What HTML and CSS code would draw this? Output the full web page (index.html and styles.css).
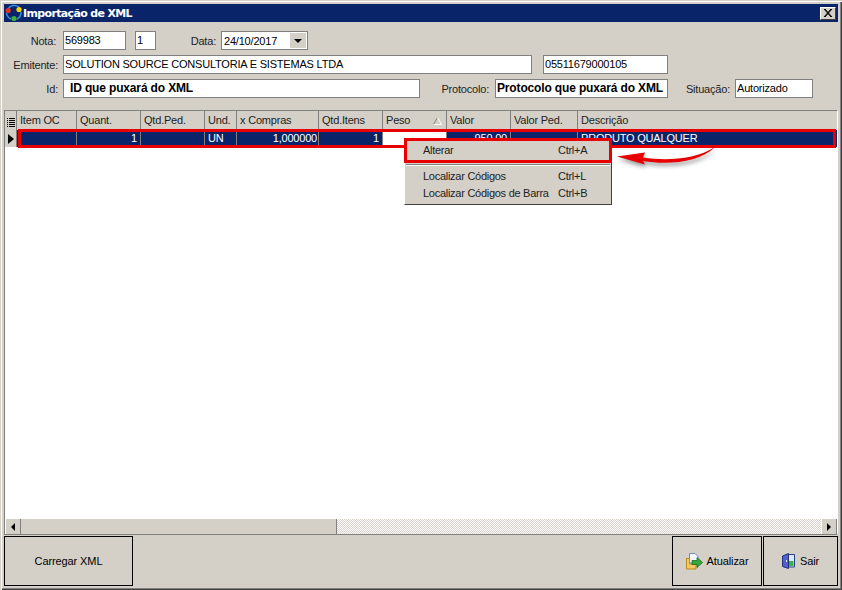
FILE: index.html
```html
<!DOCTYPE html>
<html lang="pt">
  <head>
    <meta charset="UTF-8" />
    <title>Importação de XML</title>
    <link rel="stylesheet" href="styles.css">
  </head>
  <body>
    <div class="window">
      <div class="titlebar">
        <svg class="logo" width="18" height="18" viewBox="0 0 18 18">
          <path d="M3 5 A7.5 7.5 0 0 1 14 3 M16 8 A7.5 7.5 0 0 1 12 15 M6 15 A7.5 7.5 0 0 1 1.5 9" fill="none" stroke="#3a8fe0" stroke-width="1.5"/>
          <circle cx="3.2" cy="6.5" r="2.6" fill="#e8301c"/>
          <circle cx="14" cy="5.5" r="2.6" fill="#f5d60a"/>
          <circle cx="9" cy="14.5" r="2.6" fill="#3fae35"/>
        </svg>
        <span class="title">Importação de XML</span>
        <button class="close">
          <svg width="9" height="8" viewBox="0 0 9 8"><path d="M1 0 L8 8 M0 0 L7 8 M8 0 L1 8 M7 0 L0 8" stroke="#000" stroke-width="1"/></svg>
        </button>
      </div>

      <div class="form">
        <div class="form-row">
          <label class="lbl-nota">Nota:</label>
          <div class="field w-nota">569983</div>
          <div class="field w-serie">1</div>
          <label class="lbl-data">Data:</label>
          <div class="field combo">
            <span>24/10/2017</span>
            <span class="combo-btn"></span>
          </div>
        </div>
        <div class="form-row">
          <label class="lbl-first">Emitente:</label>
          <div class="field w-emitente">SOLUTION SOURCE CONSULTORIA E SISTEMAS LTDA</div>
          <div class="field w-cnpj">05511679000105</div>
        </div>
        <div class="form-row">
          <label class="lbl-first">Id:</label>
          <div class="field bold w-id">ID que puxará do XML</div>
          <label class="lbl-protocolo">Protocolo:</label>
          <div class="field bold w-protocolo">Protocolo que puxará do XML</div>
          <label class="lbl-situacao">Situação:</label>
          <div class="field w-situacao">Autorizado</div>
        </div>
      </div>

      <div class="grid">
        <div class="grid-head">
          <div class="cell c-ind">
            <svg width="8" height="11" viewBox="0 0 8 11"><path d="M0 1.5h1M0 3.5h1M0 5.5h1M0 7.5h1M0 9.5h1M2 1.5h6M2 3.5h6M2 5.5h6M2 7.5h6M2 9.5h6" stroke="#000"/></svg>
          </div>
          <div class="cell c-item">Item OC</div>
          <div class="cell c-quant">Quant.</div>
          <div class="cell c-qtdped">Qtd.Ped.</div>
          <div class="cell c-und">Und.</div>
          <div class="cell c-compras">x Compras</div>
          <div class="cell c-itens">Qtd.Itens</div>
          <div class="cell c-peso">Peso
            <svg class="sort" width="9" height="8" viewBox="0 0 9 8"><path d="M4.5 .5 L8.5 7.5 H.5 Z" fill="#d4d0c8"/><path d="M4.5 .5 L.5 7.5" stroke="#808080" fill="none"/><path d="M4.5 .5 L8.5 7.5 H.5" stroke="#fff" fill="none"/></svg>
          </div>
          <div class="cell c-valor">Valor</div>
          <div class="cell c-valorped">Valor Ped.</div>
          <div class="cell c-desc">Descrição</div>
        </div>
        <div class="grid-row">
          <div class="cell c-ind"><span class="row-mark"></span></div>
          <div class="cell c-item"></div>
          <div class="cell c-quant num">1</div>
          <div class="cell c-qtdped"></div>
          <div class="cell c-und">UN</div>
          <div class="cell c-compras num">1,000000</div>
          <div class="cell c-itens num">1</div>
          <div class="cell c-peso focused"></div>
          <div class="cell c-valor num">950,00</div>
          <div class="cell c-valorped"></div>
          <div class="cell c-desc">PRODUTO QUALQUER</div>
        </div>
        <div class="grid-body"></div>
        <div class="scrollbar">
          <span class="sb-btn"><span class="arrow-left"></span></span>
          <span class="sb-thumb"></span>
          <span class="sb-track"></span>
          <span class="sb-btn"><span class="arrow-right"></span></span>
        </div>
      </div>

      <div class="footer">
        <button class="action w-carregar">Carregar XML</button>
        <div class="spacer"></div>
        <button class="action w-atualizar">
          <svg width="17" height="17" viewBox="0 0 17 17">
            <path d="M3.5 .5 H9 L12 3.5 V10 H3.5 Z" fill="#f4f6ff" stroke="#7a86b8"/>
            <path d="M.5 5.5 H3.5 V11 H10 V16 H.5 Z" fill="#f2c860" stroke="#b88a20"/>
            <path d="M6 7.5 H11 V4.5 L16.5 9.5 L11 14.5 V11.5 H6 Z" fill="#35a83a" stroke="#1c6e22" stroke-width=".8"/>
          </svg>
          Atualizar
        </button>
        <button class="action w-sair">
          <svg width="13" height="16" viewBox="0 0 13 16">
            <path d="M4 1.5 H12.5 V14 H4 Z" fill="#dfe8f5" stroke="#25408a"/>
            <path d="M7 8 H11.5 V13 H7 Z" fill="#3fb04a"/>
            <path d="M.5 3 L6.5 .5 V15.5 L.5 13.5 Z" fill="#5060d0" stroke="#22307a"/>
            <path d="M4.5 7 V9" stroke="#dfe8f5"/>
          </svg>
          Sair
        </button>
      </div>

      <!-- marcacoes vermelhas do print -->
      <div class="mark-row"></div>
      <div class="menu">
        <div class="menu-item first"><span>Alterar</span><span class="key">Ctrl+A</span></div>
        <div class="menu-sep"></div>
        <div class="menu-item"><span>Localizar Códigos</span><span class="key">Ctrl+L</span></div>
        <div class="menu-item"><span>Localizar Códigos de Barra</span><span class="key">Ctrl+B</span></div>
        <div class="mark-item"></div>
      </div>
      <svg class="swoosh" width="110" height="24" viewBox="0 0 110 24">
        <path d="M0 10.5 L28 6.5 L26 11.5 C48 15 78 14 98 1 C82 17 50 19 26 15 L28 18.5 Z" fill="#e80000"/>
      </svg>
    </div>
  </body>
</html>
```

FILE: styles.css
```css
* {
  box-sizing: border-box;
}
html,
body {
  margin: 0;
  padding: 0;
}
body {
  width: 842px;
  height: 590px;
  overflow: hidden;
  font-family: "Liberation Sans", Arial, sans-serif;
  font-size: 11px;
  letter-spacing: -0.2px;
  color: #000;
  background-color: #d4d0c8;
}
.window {
  position: relative;
  width: 842px;
  height: 590px;
  padding: 4px;
  display: flex;
  flex-direction: column;
  background-color: #d4d0c8;
  box-shadow: inset 1px 1px 0 #d4d0c8, inset 2px 2px 0 #fff, inset -1px -1px 0 #404040, inset -2px -2px 0 #808080;
}

/* title */
.titlebar {
  height: 18px;
  flex: none;
  display: flex;
  align-items: center;
  background-color: #0a246a;
  color: #fff;
}
.logo {
  flex: none;
  margin-left: 1px;
}
.title {
  flex: 1;
  font-weight: bold;
  font-size: 11px;
  font-family: "DejaVu Sans", sans-serif;
  letter-spacing: -0.65px;
}
.close {
  width: 16px;
  height: 13px;
  margin-right: 2px;
  padding: 0;
  display: flex;
  align-items: center;
  justify-content: center;
  background-color: #d4d0c8;
  border: 1px solid;
  border-color: #fff #404040 #404040 #fff;
}

/* form */
.form {
  flex: none;
  height: 88px;
  padding-top: 9px;
}
.form-row {
  display: flex;
  align-items: center;
  height: 19px;
  margin-bottom: 5px;
  color: #222;
}
.form-row label {
  flex: none;
  text-align: right;
}
.lbl-first {
  width: 54px;
}
.lbl-nota {
  width: 52px;
}
.field {
  flex: none;
  height: 19px;
  margin-left: 5px;
  padding: 0 1px;
  line-height: 16px;
  background-color: #fff;
  border: 1px solid #808080;
  white-space: nowrap;
  overflow: hidden;
  color: #000;
}
.bold {
  font-weight: bold;
  font-size: 12px;
  letter-spacing: -0.15px;
}
.w-nota {
  width: 63px;
  margin-left: 7px;
}
.w-serie {
  width: 21px;
  margin-left: 9px;
}
.lbl-data {
  width: 60px;
}
.combo {
  width: 87px;
  display: flex;
  align-items: center;
  justify-content: space-between;
  padding: 0 0 0 2px;
}
.combo-btn {
  position: relative;
  width: 16px;
  height: 15px;
  margin-right: 1px;
  background-color: #d4d0c8;
}
.combo-btn::after {
  content: "";
  position: absolute;
  left: 4px;
  top: 6px;
  border: 4px solid transparent;
  border-top: 4px solid #000;
  border-bottom: 0;
}
.w-emitente {
  width: 469px;
}
.w-cnpj {
  width: 125px;
  margin-left: 11px;
}
.w-id {
  width: 357px;
  padding-left: 6px;
}
.lbl-protocolo {
  width: 69px;
}
.w-protocolo {
  width: 173px;
  margin-left: 6px;
}
.lbl-situacao {
  width: 62px;
}
.w-situacao {
  width: 78px;
}

/* grid */
.grid {
  flex: none;
  height: 425px;
  display: flex;
  flex-direction: column;
  background-color: #fff;
  border-top: 1px solid #808080;
  border-left: 1px solid #808080;
  border-right: 1px solid #fff;
  border-bottom: 1px solid #808080;
}
.grid-head,
.grid-row {
  flex: none;
  display: flex;
}
.grid-head {
  height: 19px;
  background-color: #d4d0c8;
  color: #222;
}
.grid-row {
  height: 17px;
  background-color: #0a246a;
  color: #fff;
}
.cell {
  flex: none;
  position: relative;
  padding: 0 3px;
  line-height: 19px;
  white-space: nowrap;
  overflow: hidden;
  border-right: 1px solid #808080;
}
.grid-row .cell {
  line-height: 17px;
}
.num {
  text-align: right;
}
.c-ind {
  width: 12px;
  padding: 4px 0 0 2px;
  background-color: #d4d0c8;
  border-right: 1px solid #808080;
}
.grid-row .c-ind {
  padding: 0;
}
.c-item {
  width: 60px;
}
.c-quant,
.c-qtdped,
.c-itens,
.c-peso,
.c-valor {
  width: 64px;
}
.c-und {
  width: 32px;
}
.c-compras {
  width: 82px;
}
.c-compras.num {
  padding-right: 1px;
}
.c-valorped {
  width: 67px;
}
.c-desc {
  flex: 1;
  border-right: 0;
}
.focused {
  background-color: #fff;
}
.sort {
  position: absolute;
  right: 4px;
  top: 6px;
}
.row-mark {
  position: absolute;
  left: 3px;
  top: 4px;
  border: 5px solid transparent;
  border-left: 6px solid #000;
  border-right: 0;
}
.grid-body {
  flex: 1;
  background-color: #fff;
}
.scrollbar {
  flex: none;
  height: 15px;
  display: flex;
  background-color: #d4d0c8;
}
.sb-btn {
  flex: none;
  width: 16px;
  height: 15px;
  display: flex;
  align-items: center;
  justify-content: center;
  background-color: #d4d0c8;
  border-right: 1px solid #808080;
  border-left: 1px solid #fff;
}
.sb-thumb {
  flex: none;
  width: 316px;
  background-color: #d4d0c8;
  border-right: 1px solid #808080;
}
.sb-track {
  flex: 1;
  background-color: #fff;
  background-image: conic-gradient(#d4d0c8 25%, #fff 0 50%, #d4d0c8 0 75%, #fff 0);
  background-size: 2px 2px;
}
.arrow-left {
  border: 4px solid transparent;
  border-right: 4px solid #000;
  border-left: 0;
}
.arrow-right {
  border: 4px solid transparent;
  border-left: 4px solid #000;
  border-right: 0;
}

/* bottom buttons */
.footer {
  flex: none;
  height: 50px;
  margin-top: 1px;
  display: flex;
}
.spacer {
  flex: 1;
}
.action {
  flex: none;
  height: 50px;
  display: flex;
  align-items: center;
  justify-content: center;
  gap: 4px;
  padding: 0;
  font-family: inherit;
  font-size: 11px;
  letter-spacing: -0.1px;
  color: #000;
  background-color: #d4d0c8;
  border: 1px solid #000;
}
.w-carregar {
  width: 129px;
}
.w-atualizar {
  width: 90px;
  margin-right: 1px;
}
.w-sair {
  width: 75px;
  gap: 5px;
}

/* popup and red marks from the screenshot */
.mark-row {
  position: absolute;
  left: 18px;
  top: 129px;
  width: 818px;
  height: 19px;
  border: 3px solid #e80000;
}
.menu {
  position: absolute;
  left: 404px;
  top: 138px;
  width: 208px;
  height: 67px;
  padding-top: 2px;
  background-color: #d4d0c8;
  border: 1px solid;
  border-color: #fff #404040 #404040 #fff;
  color: #222;
  letter-spacing: -0.27px;
}
.menu-item {
  position: relative;
  height: 17px;
  padding-left: 18px;
  line-height: 17px;
}
.menu-item.first {
  height: 19px;
  line-height: 19px;
}
.key {
  position: absolute;
  left: 153px;
  top: 0;
}
.menu-sep {
  height: 2px;
  margin: 4px 1px 2px 1px;
  border-top: 1px solid #808080;
  border-bottom: 1px solid #fff;
}
.mark-item {
  position: absolute;
  left: -1px;
  top: -1px;
  width: 208px;
  height: 25px;
  border: 3px solid #e80000;
}
.swoosh {
  position: absolute;
  left: 617px;
  top: 146px;
  filter: drop-shadow(1px 3px 2px rgba(0, 0, 0, 0.4));
}
```
